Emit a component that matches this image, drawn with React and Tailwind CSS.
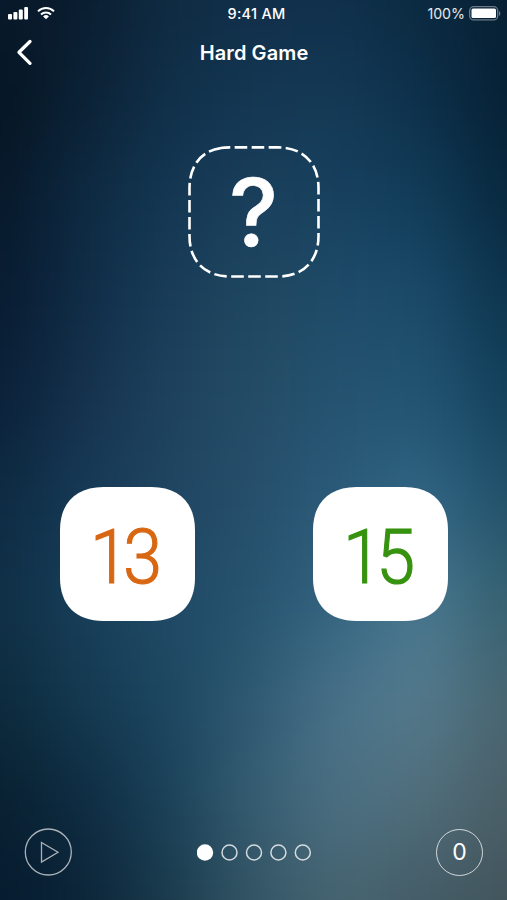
import React from "react";

// Colour samples of the backdrop, one row every 100px, seven across.
const mesh = [
  ["#07182a", "#0a1d2f", "#0f2b42", "#112e49", "#10304b", "#0b2a41", "#071f33"],
  ["#051522", "#0b2135", "#10304a", "#143752", "#143a57", "#0d304a", "#052034"],
  ["#07182a", "#0d2a42", "#143753", "#1a405d", "#17415f", "#113d5a", "#08283e"],
  ["#081b30", "#102c47", "#193d58", "#20475f", "#1f4c6a", "#1b4b6b", "#0d344d"],
  ["#0a2038", "#16324e", "#1e425d", "#254c67", "#245370", "#235674", "#12405b"],
  ["#0d2a42", "#163a56", "#1f4562", "#264f6b", "#2b5b7a", "#336786", "#205069"],
  ["#102f46", "#183f5a", "#1f4a66", "#27536f", "#336480", "#4a7a92", "#35606f"],
  ["#0c2a3c", "#143a51", "#1c4660", "#2f5a73", "#49728a", "#557b8d", "#476470"],
  ["#08202f", "#0e2b42", "#1a4259", "#365d72", "#4c7083", "#506e7b", "#4a5e66"],
  ["#051b2f", "#0c2438", "#1a3a4c", "#345565", "#466470", "#435b66", "#42545b"],
];

function Backdrop() {
  return (
    <svg className="absolute inset-0 -z-10" width="507" height="900" viewBox="0 0 507 900">
      <defs>
        <filter id="soft" filterUnits="userSpaceOnUse" x="-300" y="-300" width="1107" height="1500" colorInterpolationFilters="sRGB">
          <feGaussianBlur stdDeviation="36 42" />
        </filter>
      </defs>
      <g filter="url(#soft)">
        {mesh.map((row, r) =>
          row.map((fill, c) => {
            const x = c === 0 ? -300 : c * 84.5 - 42.25;
            const y = r === 0 ? -300 : r * 100 - 50;
            const right = c === 6 ? 807 : c * 84.5 + 42.75;
            const bottom = r === 9 ? 1200 : r * 100 + 50.5;
            return <rect key={`${r}-${c}`} x={x} y={y} width={right - x} height={bottom - y} fill={fill} />;
          })
        )}
      </g>
    </svg>
  );
}

function Card({ value, className }) {
  return (
    <div className={`relative isolate flex h-[134px] w-[135px] items-center justify-center pt-[5px] pr-[8px] font-['Roboto',sans-serif] text-[76px] font-light leading-none tracking-[-6px] [-webkit-text-stroke:1.2px_currentColor] ${className}`}>
      <svg className="absolute inset-0 -z-10" width="135" height="134" viewBox="0 0 134 134" preserveAspectRatio="none">
        <path fill="#fff" d="M43 0H91C118 0 134 16 134 43V91C134 118 118 134 91 134H43C16 134 0 118 0 91V43C0 16 16 0 43 0Z" />
      </svg>
      <span className="inline-block scale-x-[0.92]">{value}</span>
    </div>
  );
}

function Target() {
  return (
    <div className="relative isolate flex h-[132px] w-[132px] items-center justify-center">
      <svg className="absolute inset-0 -z-10" width="132" height="132" viewBox="0 0 132 132" fill="none">
        <path
          stroke="#fff"
          strokeWidth="2.6"
          strokeDasharray="12.6 4.4"
          strokeDashoffset="3"
          d="M32.7 2.1Q36 1.4 42 1.4H90C115 1.4 130.5 17 130.5 42V90C130.5 115 115 130.5 90 130.5H42C17 130.5 1.5 115 1.5 90V42C1.5 20 13 5 32.7 2.1"
        />
      </svg>
      <span className="text-[93px] font-medium leading-none [-webkit-text-stroke:0.6px_currentColor] font-['Inter',sans-serif]">?</span>
    </div>
  );
}

export default function App() {
  return (
    <div className="relative isolate flex h-[900px] w-[507px] flex-col overflow-hidden font-['Inter',sans-serif] text-white">
      <Backdrop />
      <div className="grid h-[27px] grid-cols-3 items-center pl-2 pr-[6px]">
        <div className="flex items-center gap-[9px]">
          <svg width="20" height="13" viewBox="0 0 20 13" fill="#fff">
            <rect x="0" y="7" width="4" height="5.5" rx="1" />
            <rect x="5.4" y="5" width="4" height="7.5" rx="1" />
            <rect x="10.8" y="2.5" width="4" height="10" rx="1" />
            <rect x="16.2" y="0" width="3.8" height="12.5" rx="1" />
          </svg>
          <svg width="18" height="13" viewBox="0 0 18 13" fill="none" stroke="#fff" strokeWidth="2">
            <path d="M1 4.4A11.4 11.4 0 0 1 17 4.4" />
            <path d="M4 7.5A7.2 7.2 0 0 1 14 7.5" />
            <path d="M9 12.2L6.1 9.4A4.1 4.1 0 0 1 11.9 9.4Z" fill="#fff" stroke="none" />
          </svg>
        </div>
        <span className="pl-[4px] text-center text-[14.5px] font-medium tracking-[0.25px]">9:41 AM</span>
        <div className="flex items-center justify-end gap-1">
          <span className="text-[14.2px] text-white/90">100%</span>
          <svg width="32" height="15" viewBox="0 0 32 15">
            <rect x=".7" y=".7" width="28" height="13.2" rx="4" fill="none" stroke="#fff" strokeOpacity=".4" strokeWidth="1.3" />
            <rect x="2.5" y="2.5" width="24.5" height="9.5" rx="1.5" fill="#fff" />
            <path d="M30 5C31.8 5.8 31.8 9.2 30 10Z" fill="#fff" fillOpacity=".4" />
          </svg>
        </div>
      </div>
      <div className="grid h-[51px] grid-cols-3 items-center">
        <svg className="ml-4" width="17" height="27" viewBox="0 0 17 27" fill="none" stroke="#fff" strokeWidth="3.3" strokeLinecap="round" strokeLinejoin="round">
          <path d="M14 2.5L3 13.3L14 24.3" />
        </svg>
        <h1 className="whitespace-nowrap pl-px text-center text-[20px] font-semibold tracking-[0.1px]">Hard Game</h1>
      </div>
      <div className="mt-[68px] flex justify-center">
        <Target />
      </div>
      <div className="mt-[209px] flex justify-between pl-[60px] pr-[59px]">
        <Card value="13" className="text-[#d96712]" />
        <Card value="15" className="text-[#36920f]" />
      </div>
      <div className="mt-auto mb-6 flex items-center justify-between px-6">
        <svg width="48" height="48" viewBox="0 0 48 48" fill="none" stroke="#fff" strokeOpacity=".65" strokeWidth="1.3">
          <circle cx="24.3" cy="24" r="23" />
          <path d="M17.5 14.5L34 24.3L17.5 34Z" />
        </svg>
        <svg width="115" height="17" viewBox="0 0 115 17" fill="none" stroke="#fff" strokeOpacity=".78" strokeWidth="1.5">
          <circle cx="8" cy="8.5" r="8.2" fill="#fff" stroke="none" />
          {[32.5, 57, 81.4, 105.8].map((cx) => (
            <circle key={cx} cx={cx} cy="8.5" r="7.5" />
          ))}
        </svg>
        <div className="flex h-[47px] w-[47px] items-center justify-center rounded-full border-[1.3px] border-white/75 text-[23px]">0</div>
      </div>
    </div>
  );
}
